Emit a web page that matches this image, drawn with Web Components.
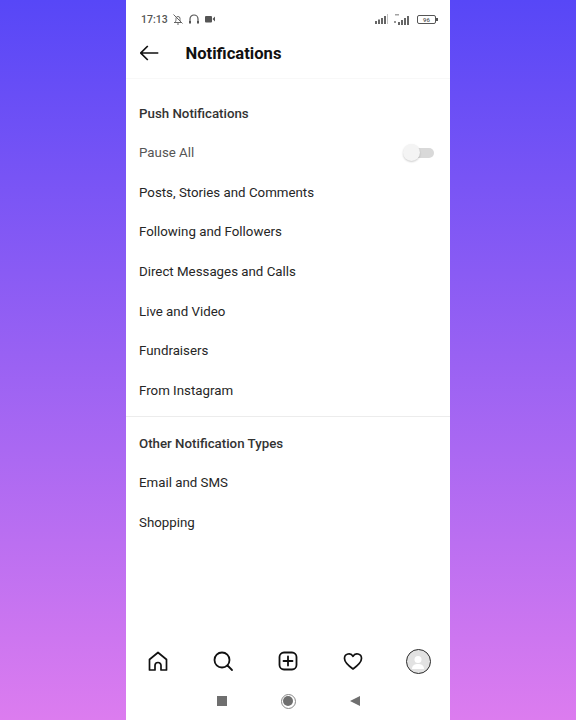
<!DOCTYPE html>
<html>
<head>
<meta charset="utf-8">
<title>Notifications</title>
<style>
  html, body { margin: 0; height: 720px; overflow: hidden; }
  body {
    display: flex;
    justify-content: center;
    background: linear-gradient(180deg, #5747f7 0%, #dc7cef 100%);
    font-family: Roboto, "Liberation Sans", sans-serif;
  }
</style>
</head>
<body>
<phone-screen>
  <status-bar></status-bar>
  <page-header>Notifications</page-header>
  <main-list>
    <section-title>Push Notifications</section-title>
    <setting-row toggle muted>Pause All</setting-row>
    <setting-row>Posts, Stories and Comments</setting-row>
    <setting-row>Following and Followers</setting-row>
    <setting-row>Direct Messages and Calls</setting-row>
    <setting-row>Live and Video</setting-row>
    <setting-row>Fundraisers</setting-row>
    <setting-row>From Instagram</setting-row>
    <list-divider></list-divider>
    <section-title>Other Notification Types</section-title>
    <setting-row>Email and SMS</setting-row>
    <setting-row>Shopping</setting-row>
  </main-list>
  <tab-bar></tab-bar>
  <system-nav></system-nav>
</phone-screen>

<script>
function define(name, html) {
  customElements.define(name, class extends HTMLElement {
    constructor() {
      super()
      this.attachShadow({ mode: 'open' }).innerHTML = html
    }
  })
}

define('phone-screen', `
  <style>
    :host {
      display: flex;
      flex-direction: column;
      width: 324px;
      height: 720px;
      background: #fff;
    }
  </style>
  <slot></slot>
`)

define('status-bar', `
  <style>
    :host {
      display: flex;
      align-items: center;
      height: 38px;
      padding: 0 13px 0 15px;
      color: #555;
      font-size: 10.500px;
      font-weight: 500;
    }
    .left { display: flex; align-items: center; gap: 4px; flex: 1; }
    .right { display: flex; align-items: center; gap: 6px; }
    svg { display: block; }
    .bat {
      display: flex; align-items: center; justify-content: center;
      width: 17px; height: 7px; border: 1px solid #555; border-radius: 2px;
      font-size: 6px; line-height: 7px; position: relative; margin-right: 1px;
    }
    .bat::after {
      content: ''; position: absolute; right: -3px; top: 2px;
      width: 2px; height: 3px; background: #555;
    }
  </style>
  <div class="left">
    <span>17:13</span>
    <svg width="12" height="12" viewBox="0 0 12 12" fill="none" stroke="#666" stroke-width="1">
      <path d="M2 9.500h8M3 9.500c1-1.500 1-2.500 1-4a2 2 0 0 1 4 0c0 1.500 0 2.500 1 4M5 11h2M1.500 1.500l9 9"/>
    </svg>
    <svg width="12" height="12" viewBox="0 0 12 12" fill="none" stroke="#555" stroke-width="1.200">
      <path d="M2 10V6a4 4 0 0 1 8 0v4"/><path d="M2 8v2.500M10 8v2.500" stroke-width="2"/>
    </svg>
    <svg width="12" height="12" viewBox="0 0 12 12" fill="#555">
      <rect x="1" y="3" width="7" height="6.500" rx="1"/><path d="M8.500 6l2.500-2.500v5z"/>
    </svg>
  </div>
  <div class="right">
    <svg width="13" height="10" viewBox="0 0 13 10" fill="#666">
      <rect x="0" y="7" width="2" height="3"/><rect x="3" y="5.500" width="2" height="4.500"/><rect x="6" y="4" width="2" height="6"/><rect x="9" y="2" width="2" height="8"/><rect x="12" y="0" width="1" height="10" opacity=".4"/>
    </svg>
    <svg width="17" height="12" viewBox="0 0 17 12" fill="#666">
      <rect x="1" y="1" width="4" height="1.500" opacity=".6"/><rect x="0" y="8" width="2" height="2" opacity=".7"/><rect x="4" y="9" width="2" height="3"/><rect x="7" y="7" width="2" height="5"/><rect x="10" y="5" width="2" height="7"/><rect x="13" y="3" width="2" height="9"/>
    </svg>
    <div class="bat">96</div>
  </div>
`)

define('page-header', `
  <style>
    :host {
      display: flex;
      align-items: center;
      height: 30px;
      margin-bottom: 10px;
      padding: 0 14px;
      color: #111;
      font-size: 16.600px;
      font-weight: 700;
    }
    svg { display: block; margin-right: 25.500px; }
  </style>
  <svg width="20" height="16" viewBox="0 0 20 16" fill="none" stroke="#111" stroke-width="1.700">
    <path d="M18.300 8H.800M7.800 1L.800 8l7 7"/>
  </svg>
  <slot></slot>
`)

define('main-list', `
  <style>
    :host {
      display: flex;
      flex-direction: column;
      flex: 1;
      padding-top: 14.400px;
      border-top: 1px solid #f8f8f8;
    }
  </style>
  <slot></slot>
`)

define('section-title', `
  <style>
    :host {
      display: flex;
      align-items: center;
      height: 39.600px;
      padding: 0 13px;
      color: #333;
      font-size: 13.300px;
      font-weight: 500;
    }
  </style>
  <slot></slot>
`)

customElements.define('setting-row', class extends HTMLElement {
  constructor() {
    super()
    const shadowRoot = this.attachShadow({ mode: 'open' })
    shadowRoot.innerHTML = `
      <style>
        :host {
          display: flex;
          align-items: center;
          justify-content: space-between;
          height: 39.600px;
          padding: 0 13px;
          color: #262626;
          font-size: 13.300px;
        }
        :host([muted]) { color: #555; }
        .track {
          position: relative;
          width: 27px;
          height: 10px;
          margin-right: 3px;
          border-radius: 5px;
          background: #d9d9d9;
        }
        .knob {
          position: absolute;
          left: -4px;
          top: -4px;
          width: 17px;
          height: 17px;
          border-radius: 50%;
          background: #f4f4f4;
          box-shadow: 0 1px 2px rgba(0,0,0,.2);
        }
      </style>
      <slot></slot>
    `
    if (this.hasAttribute('toggle')) {
      const track = document.createElement('div')
      track.className = 'track'
      track.innerHTML = '<div class="knob"></div>'
      shadowRoot.appendChild(track)
    }
  }
})

define('list-divider', `
  <style>
    :host { display: block; height: 1px; margin-top: 6.200px; margin-bottom: 6px; background: #ececec; }
  </style>
`)

define('tab-bar', `
  <style>
    :host {
      display: grid;
      grid-template-columns: repeat(5, 1fr);
      align-items: center;
      justify-items: center;
      height: 44px;
      margin-bottom: -1px;
    }
    svg { display: block; }
    .me {
      box-sizing: border-box;
      width: 25px; height: 25px; border-radius: 50%;
      margin-left: 1px;
      border: 1.800px solid #2a2a2a;
      background: #e2e2e2;
      display: flex; align-items: center; justify-content: center;
      overflow: hidden;
    }
  </style>
  <svg width="22" height="22" viewBox="0 0 22 22" fill="none" stroke="#111" stroke-width="1.700" stroke-linejoin="round">
    <path d="M2.500 9.500L11 2.500l8.500 7V20h-5.500v-4.500a3 3 0 0 0-6 0V20H2.500z"/>
  </svg>
  <svg width="22" height="22" viewBox="0 0 22 22" fill="none" stroke="#111" stroke-width="1.800" stroke-linecap="round">
    <circle cx="10" cy="10" r="7.500"/><path d="M15.500 15.500L20 20"/>
  </svg>
  <svg width="22" height="22" viewBox="0 0 22 22" fill="none" stroke="#111" stroke-width="1.800" stroke-linecap="round">
    <rect x="2.500" y="2.500" width="17" height="17" rx="4.500"/><path d="M11 6.500v9M6.500 11h9"/>
  </svg>
  <svg width="22" height="22" viewBox="0 0 22 22" fill="none" stroke="#111" stroke-width="1.700" stroke-linejoin="round">
    <path d="M11 19C5.500 15 2.500 12 2.500 8.500a4.500 4.500 0 0 1 8.500-2.200 4.500 4.500 0 0 1 8.500 2.200C19.500 12 16.500 15 11 19z"/>
  </svg>
  <div class="me">
    <svg width="16" height="16" viewBox="0 0 16 16" fill="#fff">
      <circle cx="8" cy="6.500" r="3.500"/><path d="M2 16c0-4 3-5 6-5s6 1 6 5z"/>
    </svg>
  </div>
`)

define('system-nav', `
  <style>
    :host {
      display: flex;
      align-items: center;
      justify-content: center;
      gap: 54px;
      height: 38px;
    }
    .square { width: 10px; height: 10px; background: #6f6f6f; }
    .circle {
      box-sizing: border-box;
      width: 15px; height: 15px; border-radius: 50%;
      border: 1px solid #888; padding: 1.500px;
    }
    .circle div { width: 100%; height: 100%; border-radius: 50%; background: #6f6f6f; }
    .back { width: 0; height: 0; border: 5.500px solid transparent; border-left: 0; border-right: 10px solid #6f6f6f; }
  </style>
  <div class="square"></div>
  <div class="circle"><div></div></div>
  <div class="back"></div>
`)
</script>
</body>
</html>
